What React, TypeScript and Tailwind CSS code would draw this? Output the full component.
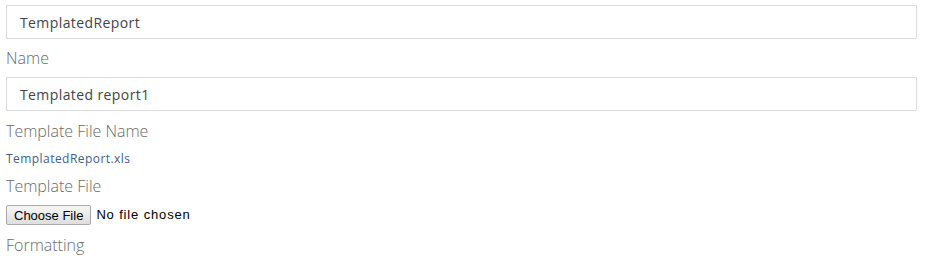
import React from "react";

const arial = { fontFamily: '"Liberation Sans", Arial, sans-serif' };

export default function App() {
  return (
    <div className="w-[928px] h-[265px] bg-white overflow-hidden pl-[6px] pr-[11px] pt-[5px]" style={{ fontFamily: '"Open Sans", sans-serif' }}>
      <div className="h-[34px] border border-[#dcdcdc] flex items-center pl-[13px] text-[14px] tracking-[0.4px] text-[#444]">
        TemplatedReport
      </div>
      <div className="h-[38px] flex items-center text-[16px] font-light text-[#6a6a6a]">Name</div>
      <div className="h-[34px] border border-[#dcdcdc] flex items-center pl-[13px] text-[14px] tracking-[0.4px] text-[#444]">
        Templated report1
      </div>
      <div className="h-[40px] flex items-center text-[16px] font-light text-[#6a6a6a]">Template File Name</div>
      <div className="h-[16px] flex items-center text-[12px] tracking-[0.45px] text-[#3b6186]">TemplatedReport.xls</div>
      <div className="h-[38px] flex items-center text-[16px] font-light text-[#6a6a6a]">Template File</div>
      <div className="flex items-center h-[20px]">
        <button
          className="h-[20px] px-[7px] border border-[#a9a9a9] rounded-[2px] bg-gradient-to-b from-[#f6f6f6] to-[#dedede] text-[13px] text-black leading-none"
          style={arial}
        >
          Choose File
        </button>
        <span className="ml-[5px] text-[13px] tracking-[0.85px] text-black" style={arial}>
          No file chosen
        </span>
      </div>
      <div className="h-[40px] flex items-center text-[16px] font-light text-[#6a6a6a]">Formatting</div>
    </div>
  );
}
